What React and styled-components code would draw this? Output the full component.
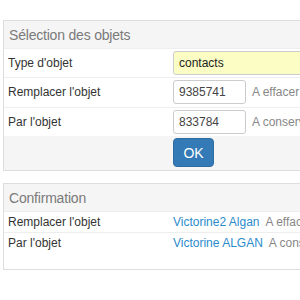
import React from 'react'
import styled, { createGlobalStyle } from 'styled-components'

const GlobalStyle = createGlobalStyle`
  html, body {
    margin: 0;
    padding: 0;
    background: #ffffff;
    overflow: hidden;
  }
  body {
    font-family: "Liberation Sans", Arial, sans-serif;
    font-size: 12px;
    color: #333333;
  }
`

const Page = styled.div`
  width: 300px;
  height: 300px;
  padding: 20px 0 0 3px;
  box-sizing: border-box;
  overflow: hidden;
`

const Panel = styled.div`
  width: 330px;
  border: 1px solid #dddddd;
  margin-bottom: 12px;
  min-height: ${(props) => props.minHeight || 'auto'};
  box-sizing: border-box;
`

const PanelHeader = styled.div`
  height: 27px;
  background: #f5f5f5;
  display: flex;
  align-items: center;
  padding-left: 5px;
  font-size: 14px;
  color: #7a7a7a;
  letter-spacing: -0.2px;
`

const Row = styled.div`
  display: grid;
  grid-template-columns: 169px 1fr;
  align-items: center;
  border-top: 1px solid #eeeeee;
  padding: ${(props) => props.pad || '2px 0'};
  min-height: ${(props) => props.h || '24px'};
`

const Label = styled.div`
  padding-left: 4px;
  color: #333333;
`

const Field = styled.div`
  display: flex;
  align-items: center;
  gap: 6px;
`

const Input = styled.div`
  width: ${(props) => props.w || '73px'};
  height: 24px;
  box-sizing: border-box;
  border: 1px solid #cccccc;
  border-radius: 3px;
  background: ${(props) => props.bg || '#ffffff'};
  padding-left: 5px;
  display: flex;
  align-items: center;
  color: ${(props) => props.color || '#444444'};
`

const Hint = styled.span`
  color: #888888;
  white-space: nowrap;
`

const Actions = styled.div`
  background: #f5f5f5;
  padding: 2px 0 3px 169px;
`

const Button = styled.div`
  width: 41px;
  height: 29px;
  box-sizing: border-box;
  background: #337ab7;
  border: 1px solid #2e6da4;
  border-radius: 4px;
  color: #ffffff;
  font-size: 14px;
  display: flex;
  align-items: center;
  justify-content: center;
`

const Link = styled.span`
  color: #2b8ccc;
  white-space: nowrap;
`

export default function App() {
  return (
    <>
      <GlobalStyle />
      <Page>
        <Panel>
          <PanelHeader>Sélection des objets</PanelHeader>
          <Row>
            <Label>Type d'objet</Label>
            <Field>
              <Input w="160px" bg="#fcfdc4" color="#222222">contacts</Input>
            </Field>
          </Row>
          <Row pad="2px 0 3px">
            <Label>Remplacer l'objet</Label>
            <Field>
              <Input>9385741</Input>
              <Hint>A effacer</Hint>
            </Field>
          </Row>
          <Row>
            <Label>Par l'objet</Label>
            <Field>
              <Input>833784</Input>
              <Hint>A conserver</Hint>
            </Field>
          </Row>
          <Actions>
            <Button>OK</Button>
          </Actions>
        </Panel>

        <Panel minHeight="87px">
          <PanelHeader>Confirmation</PanelHeader>
          <Row pad="0" h="20px">
            <Label>Remplacer l'objet</Label>
            <Field>
              <Link>Victorine2 Algan</Link>
              <Hint>A effacer</Hint>
            </Field>
          </Row>
          <Row pad="0" h="20px">
            <Label>Par l'objet</Label>
            <Field>
              <Link>Victorine ALGAN</Link>
              <Hint>A conserver</Hint>
            </Field>
          </Row>
        </Panel>
      </Page>
    </>
  )
}
